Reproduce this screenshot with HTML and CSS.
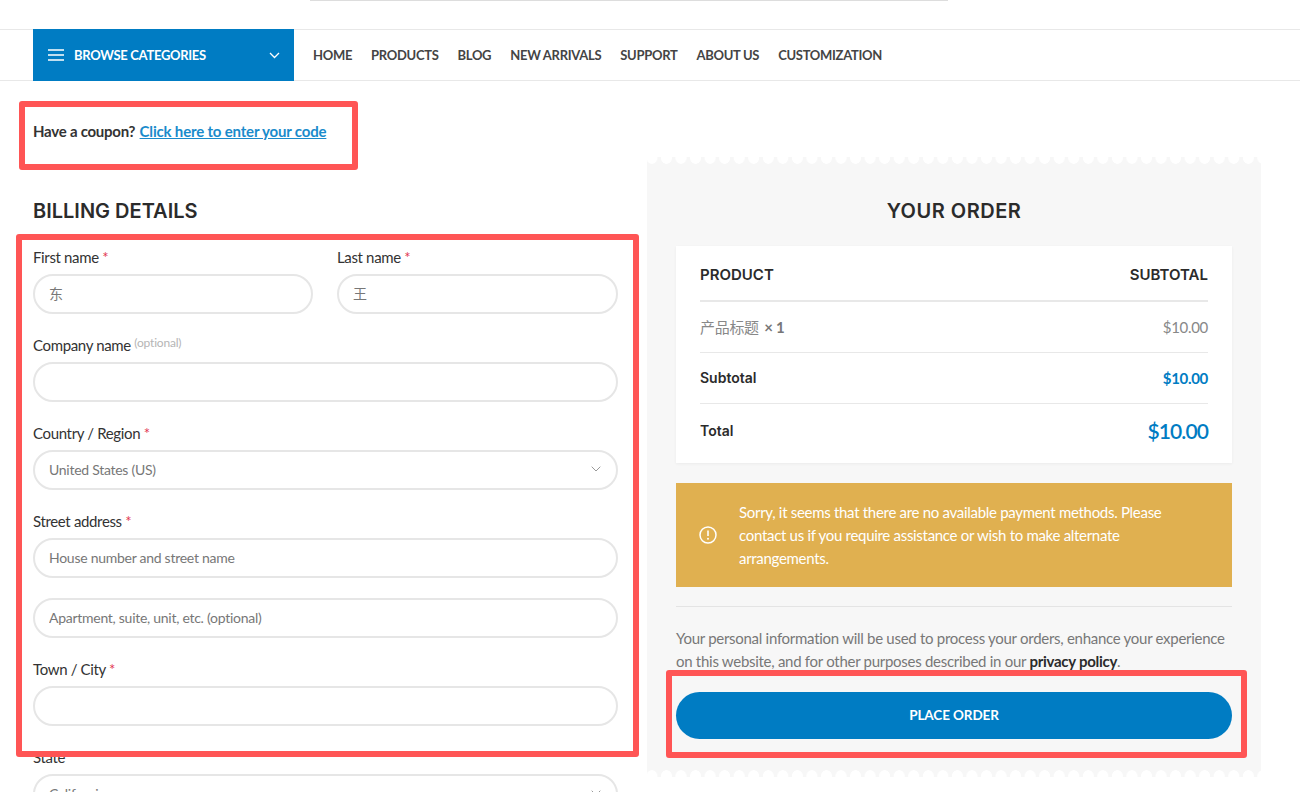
FILE: index.html
```html
<!DOCTYPE html>
<html lang="en">
<head>
<meta charset="utf-8">
<title>Checkout</title>
<link rel="stylesheet" href="styles.css">
</head>
<body>
<div class="page">
  <div class="topbar"><div class="search-edge"></div></div>
  <nav class="nav">
    <div class="browse">
      <svg class="burger" width="16" height="12" viewBox="0 0 16 12"><path d="M0 1h16M0 6h16M0 11h16" stroke="#fff" stroke-width="1.5" fill="none"/></svg>
      <span class="browse-label">BROWSE CATEGORIES</span>
      <svg class="chev" width="11" height="7" viewBox="0 0 11 7"><path d="M1 1l4.500 4.500L10 1" stroke="#fff" stroke-width="1.300" fill="none"/></svg>
    </div>
    <ul class="menu">
      <li>HOME</li><li>PRODUCTS</li><li>BLOG</li><li>NEW ARRIVALS</li><li>SUPPORT</li><li>ABOUT US</li><li>CUSTOMIZATION</li>
    </ul>
  </nav>
  <main class="main">
    <p class="coupon">Have a coupon? <a class="coupon-link" href="#">Click here to enter your code</a></p>
    <div class="columns">
      <section class="billing">
        <h2 class="heading">BILLING DETAILS</h2>
        <form class="form">
          <div class="pair">
            <div class="field">
              <label class="label">First name <span class="req">*</span></label>
              <input class="input" value="东">
            </div>
            <div class="field">
              <label class="label">Last name <span class="req">*</span></label>
              <input class="input" value="王">
            </div>
          </div>
          <div class="field">
            <label class="label">Company name <span class="opt">(optional)</span></label>
            <input class="input">
          </div>
          <div class="field">
            <label class="label">Country / Region <span class="req">*</span></label>
            <div class="input select">United States (US)
              <svg class="select-chev" width="10" height="6" viewBox="0 0 10 6"><path d="M.7.7L5 5l4.300-4.300" stroke="#999" stroke-width="1" fill="none"/></svg>
            </div>
          </div>
          <div class="field">
            <label class="label">Street address <span class="req">*</span></label>
            <input class="input" placeholder="House number and street name">
          </div>
          <div class="field">
            <input class="input" placeholder="Apartment, suite, unit, etc. (optional)">
          </div>
          <div class="field">
            <label class="label">Town / City <span class="req">*</span></label>
            <input class="input">
          </div>
          <div class="field">
            <label class="label">State <span class="req">*</span></label>
            <div class="input select">California
              <svg class="select-chev" width="10" height="6" viewBox="0 0 10 6"><path d="M.7.7L5 5l4.300-4.300" stroke="#999" stroke-width="1" fill="none"/></svg>
            </div>
          </div>
        </form>
      </section>
      <aside class="order">
        <h2 class="heading heading-center">YOUR ORDER</h2>
        <div class="card">
          <div class="row row-head"><span>PRODUCT</span><span>SUBTOTAL</span></div>
          <div class="row row-item"><span class="item-name">产品标题 <b class="qty">× 1</b></span><span>$10.00</span></div>
          <div class="row row-sub"><span class="row-label">Subtotal</span><span class="price">$10.00</span></div>
          <div class="row row-total"><span class="row-label">Total</span><span class="price price-big">$10.00</span></div>
        </div>
        <div class="notice">
          <svg class="notice-icon" width="18" height="18" viewBox="0 0 18 18"><circle cx="9" cy="9" r="8" stroke="#fff" stroke-width="1.500" fill="none"/><path d="M9 4.500v5.500" stroke="#fff" stroke-width="1.600"/><circle cx="9" cy="12.800" r="1" fill="#fff"/></svg>
          <p class="notice-text">Sorry, it seems that there are no available payment methods. Please contact us if you require assistance or wish to make alternate arrangements.</p>
        </div>
        <p class="privacy">Your personal information will be used to process your orders, enhance your experience on this website, and for other purposes described in our <a class="privacy-link" href="#">privacy policy</a>.</p>
        <button class="place" type="button">PLACE ORDER</button>
      </aside>
    </div>
  </main>
  <div class="mark mark-coupon"></div>
  <div class="mark mark-form"></div>
  <div class="mark mark-button"></div>
</div>
</body>
</html>
```
FILE: styles.css
```css
* { box-sizing: border-box; }
html, body { margin: 0; padding: 0; background: #fff; }
body { font-family: Lato, "Noto Sans CJK SC", sans-serif; font-size: 15px; letter-spacing: -0.3px; color: #333; }
.page { position: relative; width: 1300px; height: 792px; overflow: hidden; }

.topbar { height: 29px; padding-left: 310px; }
.search-edge { width: 638px; height: 1px; background: #ddd; }

.nav { display: flex; height: 52px; border-top: 1px solid #e8e8e8; border-bottom: 1px solid #e8e8e8; padding-left: 33px; }
.browse { display: flex; align-items: center; width: 261px; height: 52px; margin-top: -1px; padding: 0 14px 0 15px; background: #007cc3; color: #fff; font-weight: 700; font-size: 13px; letter-spacing: -0.3px; }
.burger { margin-right: 10px; }
.browse-label { flex: 1; }
.menu { display: flex; align-items: center; gap: 19px; margin: 0; padding: 0 0 0 19px; list-style: none; font-weight: 700; font-size: 13px; letter-spacing: -0.3px; color: #444; }

.main { padding: 39px 0 0 33px; }
.coupon { margin: 0; line-height: 22px; font-weight: 700; letter-spacing: -0.25px; color: #333; }
.coupon-link { margin-left: 1px; letter-spacing: -0.18px; color: #1a8bcb; text-decoration: underline; }
.columns { display: grid; grid-template-columns: 585px 614px; column-gap: 29px; margin-top: 15px; align-items: start; }

.heading { margin: 0 0 20px; padding-top: 39px; line-height: 30px; box-sizing: content-box; height: 30px; font-family: Inter, sans-serif; font-weight: 600; font-size: 20px; letter-spacing: 0; color: #2b2b2b; }
.heading-center { text-align: center; letter-spacing: 0.5px; }

.pair { display: grid; grid-template-columns: 280px 281px; column-gap: 24px; }
.field { margin-bottom: 20px; }
.label { display: block; height: 22px; line-height: 22px; margin-bottom: 6px; font-size: 15px; letter-spacing: -0.35px; color: #333; }
.req { color: #e2364f; }
.opt { position: relative; top: -4px; font-size: 12px; letter-spacing: -0.2px; color: #b5b5b5; }
.input { display: block; width: 100%; height: 40px; padding: 0 14px 2px; border: 2px solid #e6e6e6; border-radius: 20px; background: #fff; font: 14px Lato, "Noto Sans CJK SC", sans-serif; letter-spacing: -0.27px; color: #777; outline: 0; }
.input::placeholder { color: #777; opacity: 1; }
.select { display: flex; align-items: center; justify-content: space-between; padding-right: 15px; }

.order { position: relative; height: 620px; padding: 0 29px; background: #f7f7f7; }
.order::before, .order::after { content: ""; position: absolute; left: 0; right: 0; height: 7px; background-repeat: repeat-x; }
.order::before { top: 0; background-image: radial-gradient(circle at 50% 1.500px, #fff 5px, rgba(255,255,255,0) 5.500px), linear-gradient(90deg, rgba(255,255,255,0) 1.800px, #fff 1.800px, #fff 12.800px, rgba(255,255,255,0) 12.800px); background-size: 14.560px 7px, 14.560px 2px; background-position: -2.380px 0, -2.380px 0; }
.order::after { bottom: 0; background-image: radial-gradient(circle at 50% 5.500px, #fff 5px, rgba(255,255,255,0) 5.500px), linear-gradient(90deg, rgba(255,255,255,0) 1.800px, #fff 1.800px, #fff 12.800px, rgba(255,255,255,0) 12.800px); background-size: 14.560px 7px, 14.560px 2px; background-position: -2.380px 0, -2.380px 100%; }

.card { height: 217px; padding: 0 24px; background: #fff; box-shadow: 0 1px 3px rgba(0,0,0,.05); }
.row { display: flex; align-items: center; justify-content: space-between; line-height: 20px; }
.row-head { height: 56px; padding-top: 4px; border-bottom: 2px solid #e8e8e8; font-family: Inter, sans-serif; font-weight: 600; font-size: 15px; letter-spacing: 0; color: #2b2b2b; }
.row-item { height: 51px; border-bottom: 1px solid #e8e8e8; color: #888; }
.qty { color: #777; font-weight: 700; margin-left: 2px; }
.row-sub { height: 51px; border-bottom: 1px solid #e8e8e8; }
.row-total { height: 59px; padding-bottom: 5px; }
.row-label { font-family: Inter, sans-serif; font-weight: 600; font-size: 14px; letter-spacing: 0; color: #2b2b2b; }
.price { font-weight: 700; color: #007cc3; }
.price-big { font-size: 21px; font-weight: 600; letter-spacing: -0.9px; }

.notice { display: flex; align-items: center; height: 104px; margin-top: 20px; padding: 0 32px 0 23px; background: #e0b050; color: #fff; }
.notice-icon { flex: none; margin-right: 22px; }
.notice-text { margin: 0; line-height: 23px; }

.privacy { margin: 19px 0 0; padding-top: 20px; border-top: 1px solid #e4e4e4; line-height: 23px; letter-spacing: -0.28px; color: #777; }
.privacy-link { color: #2b2b2b; font-weight: 700; text-decoration: none; }
.place { display: block; width: 100%; height: 47px; margin-top: 19px; padding: 0 0 2px; border: 0; border-radius: 24px; background: #007cc3; color: #fff; font: 700 13.500px Lato, sans-serif; letter-spacing: -0.1px; }

.mark { position: absolute; border: 6px solid #ff5555; border-radius: 3px; pointer-events: none; }
.mark-coupon { left: 19px; top: 101px; width: 339px; height: 69px; }
.mark-form { left: 16px; top: 234px; width: 623px; height: 523px; }
.mark-button { left: 666px; top: 670px; width: 581px; height: 88px; }
```
